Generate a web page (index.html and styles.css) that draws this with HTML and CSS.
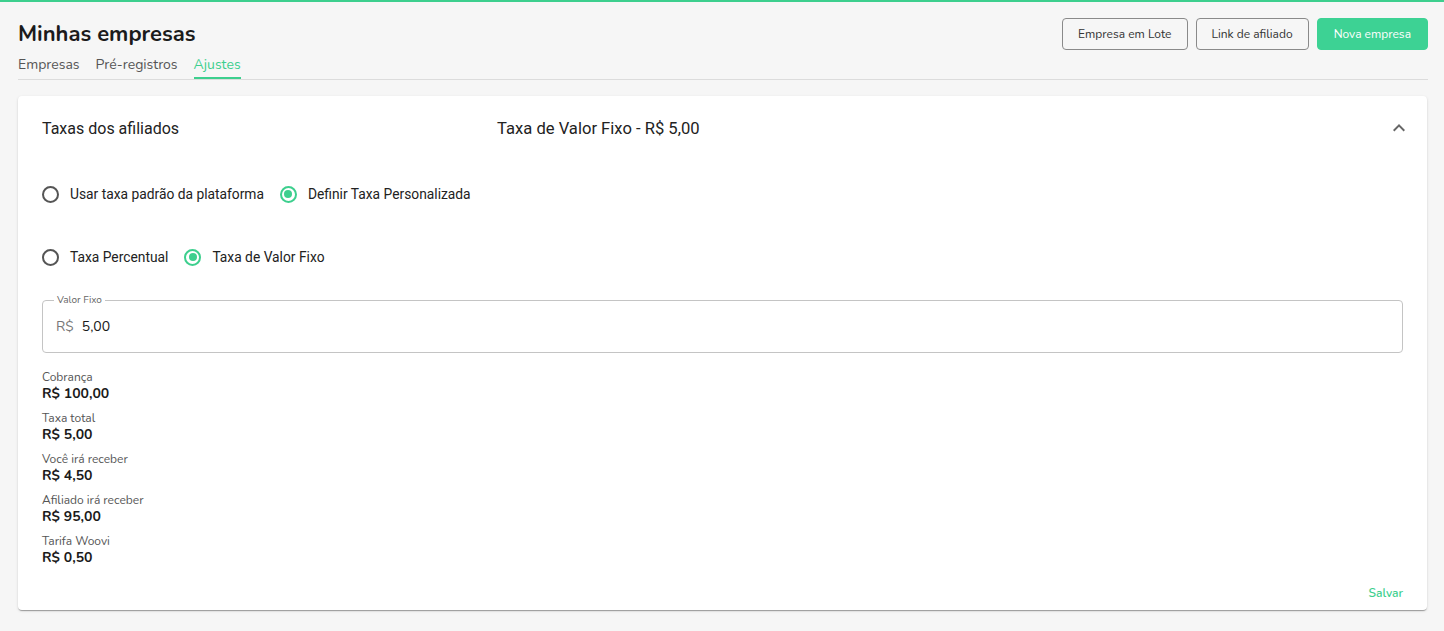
FILE: index.html
```html
<!DOCTYPE html>
<html lang="pt-BR">
<head>
<meta charset="utf-8">
<title>Minhas empresas</title>
<link rel="stylesheet" href="styles.css">
</head>
<body>
<div class="topbar"></div>
<main class="page">
  <header class="head">
    <div class="head-left">
      <h1 class="title">Minhas empresas</h1>
      <nav class="tabs">
        <span class="tab">Empresas</span>
        <span class="tab">Pré-registros</span>
        <span class="tab active">Ajustes</span>
      </nav>
    </div>
    <div class="actions">
      <button class="btn outline">Empresa em Lote</button>
      <button class="btn outline">Link de afiliado</button>
      <button class="btn primary">Nova empresa</button>
    </div>
  </header>

  <section class="card">
    <div class="acc-head">
      <span class="acc-title">Taxas dos afiliados</span>
      <span class="acc-summary">Taxa de Valor Fixo - R$ 5,00</span>
      <svg class="chev" width="24" height="24" viewBox="0 0 24 24"><path d="M7.41 15.41 12 10.83l4.59 4.58L18 14l-6-6-6 6z" fill="#666"/></svg>
    </div>
    <div class="acc-body">
      <div class="radios row1">
        <label class="radio"><span class="dot"></span>Usar taxa padrão da plataforma</label>
        <label class="radio checked"><span class="dot"></span>Definir Taxa Personalizada</label>
      </div>
      <div class="radios row2">
        <label class="radio"><span class="dot"></span>Taxa Percentual</label>
        <label class="radio checked"><span class="dot"></span>Taxa de Valor Fixo</label>
      </div>
      <fieldset class="field">
        <legend>Valor Fixo</legend>
        <span class="prefix">R$</span><span class="val">5,00</span>
      </fieldset>
      <dl class="summary">
        <div class="item"><dt>Cobrança</dt><dd>R$ 100,00</dd></div>
        <div class="item"><dt>Taxa total</dt><dd>R$ 5,00</dd></div>
        <div class="item"><dt>Você irá receber</dt><dd>R$ 4,50</dd></div>
        <div class="item"><dt>Afiliado irá receber</dt><dd>R$ 95,00</dd></div>
        <div class="item"><dt>Tarifa Woovi</dt><dd>R$ 0,50</dd></div>
      </dl>
      <div class="footer"><button class="save">Salvar</button></div>
    </div>
  </section>
</main>
</body>
</html>
```
FILE: styles.css
```css
* { box-sizing: border-box; }
html, body { margin: 0; padding: 0; }
body {
  background: #f6f6f6;
  font-family: "Nunito", "Lato", "Open Sans", sans-serif;
  color: #1a1a1a;
  height: 631px;
  overflow: hidden;
}
.topbar { height: 2px; background: #3dcf8e; }
.page { padding: 0 16px 0 18px; }
.head {
  display: flex;
  justify-content: space-between;
  align-items: flex-start;
  border-bottom: 1px solid #dcdcdc;
  width: 1410px;
}
.head-left { display: flex; flex-direction: column; }
.title {
  margin: 19px 0 0 0;
  font-size: 22px;
  font-weight: 700;
  line-height: 26px;
  color: #1b1b1b;
  letter-spacing: 0;
}
.tabs { display: flex; gap: 16px; margin-top: 9px; }
.tab {
  font-size: 14px;
  line-height: 18px;
  color: #555;
  padding-bottom: 3px;
  border-bottom: 2px solid transparent;
}
.tab.active { color: #3dcf8e; border-bottom-color: #3dcf8e; }
.actions { display: flex; gap: 8px; margin-top: 16px; }
.btn {
  font-family: inherit;
  font-size: 12px;
  height: 32px;
  padding: 0 15px;
  border-radius: 4px;
  cursor: pointer;
}
.btn.outline { background: #f6f6f6; border: 1px solid #8a8a8a; color: #333; }
.btn.primary { background: #3dd294; border: 1px solid #3dd294; color: #fff; padding: 0 16px; }
.card {
  margin-top: 16px;
  width: 1409px;
  background: #fff;
  border-radius: 4px;
  box-shadow: 0 2px 1px -1px rgba(0,0,0,.2), 0 1px 1px 0 rgba(0,0,0,.14), 0 1px 3px 0 rgba(0,0,0,.12);
}
.acc-head {
  display: flex;
  align-items: center;
  height: 64px;
  padding: 0 16px 0 24px;
  font-family: "Roboto", sans-serif;
}
.acc-title { width: 455px; font-size: 16px; color: #222; }
.acc-summary { flex: 1; font-size: 16.6px; color: #222; }
.acc-body { padding: 0 24px 5px 24px; }
.radios { display: flex; gap: 16px; font-family: "Roboto", sans-serif; font-size: 13.8px; color: #222; }
.row1 { margin-top: 23px; }
.row2 { margin-top: 41px; }
.radio { display: flex; align-items: center; gap: 11px; height: 22px; }
.dot {
  width: 17px; height: 17px;
  border: 2px solid #555;
  border-radius: 50%;
  display: inline-flex; align-items: center; justify-content: center;
}
.radio.checked .dot { border-color: #3dcf8e; }
.radio.checked .dot::after {
  content: ""; width: 8px; height: 8px; border-radius: 50%; background: #3dcf8e;
}
.field {
  margin: 27px 0 0 0;
  height: 58px;
  border: 1px solid #c4c4c4;
  border-radius: 4px;
  padding: 0 13px;
  display: flex;
  align-items: center;
}
.field legend {
  font-size: 10px;
  color: #666;
  padding: 0 3px;
  margin-left: -2px;
  line-height: 10px;
}
.prefix { font-size: 14px; color: #777; margin-right: 8px; margin-top: -5px; }
.val { font-size: 14px; color: #1a1a1a; margin-top: -5px; }
.summary { margin: 16px 0 0 0; display: flex; flex-direction: column; gap: 7px; }
.item { display: flex; flex-direction: column; }
.summary dt { font-size: 12px; color: #555; line-height: 16px; }
.summary dd { margin: 0; font-size: 14px; font-weight: 700; line-height: 18px; color: #1a1a1a; }
.footer { display: flex; justify-content: flex-end; margin-top: 14px; }
.save {
  font-family: inherit;
  background: none; border: 0;
  color: #3dcf8e;
  font-size: 12px;
  font-weight: 600;
  padding: 4px 0;
}
```
